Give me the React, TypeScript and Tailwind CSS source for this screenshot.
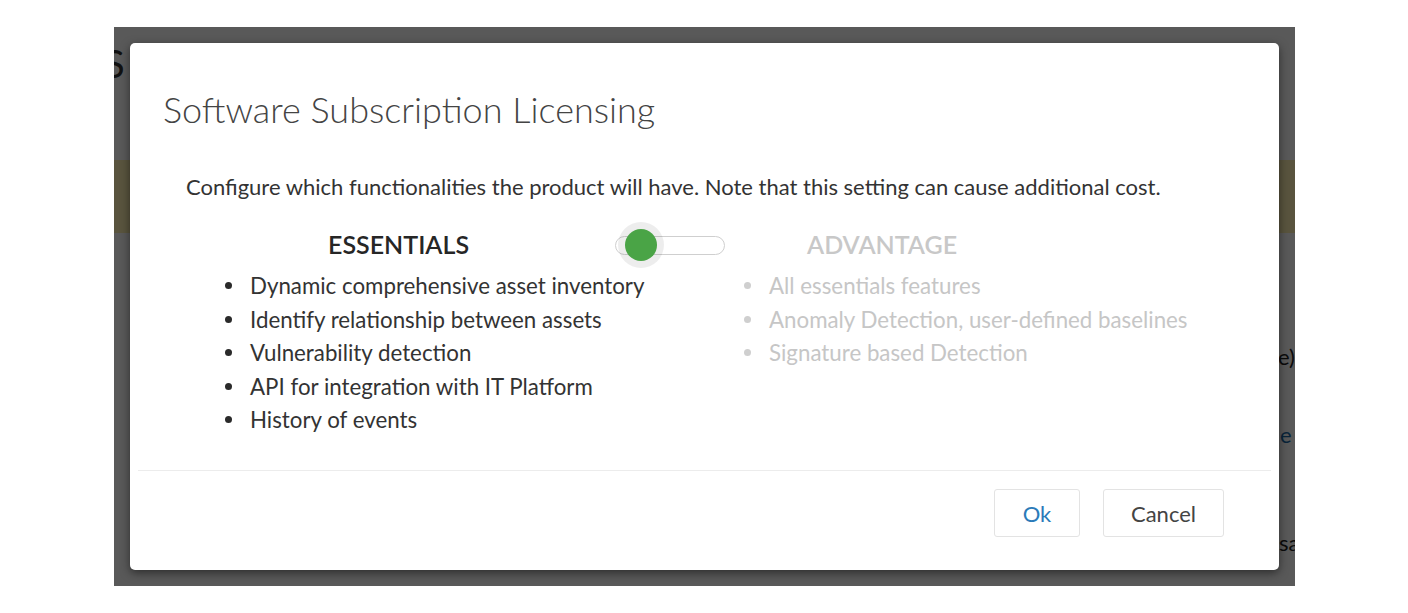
import { useState } from "react";

const essentials = [
  "Dynamic comprehensive asset inventory",
  "Identify relationship between assets",
  "Vulnerability detection",
  "API for integration with IT Platform",
  "History of events",
];

const advantage = [
  "All essentials features",
  "Anomaly Detection, user-defined baselines",
  "Signature based Detection",
];

const FeatureList = (props: { items: string[]; muted?: boolean }) => (
  <ul className="flex flex-col">
    {props.items.map((item) => (
      <li key={item} className="flex items-center h-[33.5px]">
        <span
          className={`w-[7px] h-[7px] rounded-full mr-[18px] ${
            props.muted ? "bg-[#cfcfcf]" : "bg-[#2a2a2a]"
          }`}
        />
        <span className={props.muted ? "text-[#c6c6c6]" : "text-[#333]"}>
          {item}
        </span>
      </li>
    ))}
  </ul>
);

const Toggle = (props: { on: boolean; onClick: () => void }) => (
  <button
    onClick={props.onClick}
    className="relative w-[110px] h-[19px] rounded-full border-[1.5px] border-[#cfcfcf] bg-white"
  >
    <span
      className={`absolute top-1/2 -translate-y-1/2 w-[46px] h-[46px] rounded-full bg-black/[0.07] flex items-center justify-center ${
        props.on ? "left-[64px]" : "left-[2px]"
      }`}
    >
      <span className="w-[32px] h-[32px] rounded-full bg-[#4aa446]" />
    </span>
  </button>
);

export default function App() {
  const [advanced, setAdvanced] = useState(false);

  return (
    <div className="w-[1408px] h-[613px] bg-white pt-[27px] pl-[114px] font-['Lato','Open_Sans',sans-serif]">
      <div className="relative w-[1181px] h-[559px] overflow-hidden bg-white">
        {/* page behind the dialog */}
        <div className="flex flex-col text-[#222] text-[22px] whitespace-nowrap">
          <div className="h-[18px]" />
          <div className="h-[36px] -ml-[10px] text-[38px] leading-[36px] text-[#333]">
            S
          </div>
          <div className="h-[79px]" />
          <div className="h-[73px] bg-[#fff1b3]" />
          <div className="h-[110px]" />
          <div className="h-[28px] leading-[28px] pl-[1164px]">e).</div>
          <div className="h-[50px]" />
          <div className="h-[28px] leading-[28px] pl-[1166px] text-[#1a6aa6]">
            e to
          </div>
          <div className="h-[80px]" />
          <div className="h-[28px] leading-[28px] pl-[1139px]">to save</div>
        </div>

        <div className="absolute inset-0 bg-black/65" />

        {/* dialog */}
        <div className="absolute left-[16px] top-[16px] w-[1149px] h-[527px] bg-white rounded-[5px] shadow-[0_3px_10px_rgba(0,0,0,0.5)] flex flex-col">
          <h1 className="pl-[33px] pt-[44px] text-[36px] leading-[44px] font-light text-[#444]">
            Software Subscription Licensing
          </h1>
          <p className="pl-[56px] pt-[42px] text-[22px] leading-[28px] text-[#333]">
            Configure which functionalities the product will have. Note that
            this setting can cause additional cost.
          </p>

          <div className="flex items-center pl-[198px] pt-[22px] h-[66px] text-[25px]">
            <span className="font-semibold text-[#262626] w-[287px]">ESSENTIALS</span>
            <Toggle on={advanced} onClick={() => setAdvanced(!advanced)} />
            <span className="ml-[82px] font-semibold text-[#c8c8c8]">ADVANTAGE</span>
          </div>

          <div className="flex pl-[95px] pt-[2px] text-[22.3px]">
            <div className="w-[519px]">
              <FeatureList items={essentials} />
            </div>
            <FeatureList items={advantage} muted />
          </div>

          <div className="mt-auto mx-[8px] border-t border-[#ececec]" />
          <div className="flex justify-end gap-[23px] pr-[55px] pt-[18px] pb-[33px] text-[22px]">
            <button className="w-[86px] h-[48px] rounded-[3px] border border-[#e3e3e3] text-[#2b7bb9]">
              Ok
            </button>
            <button className="w-[121px] h-[48px] rounded-[3px] border border-[#e3e3e3] text-[#444]">
              Cancel
            </button>
          </div>
        </div>
      </div>
    </div>
  );
}
